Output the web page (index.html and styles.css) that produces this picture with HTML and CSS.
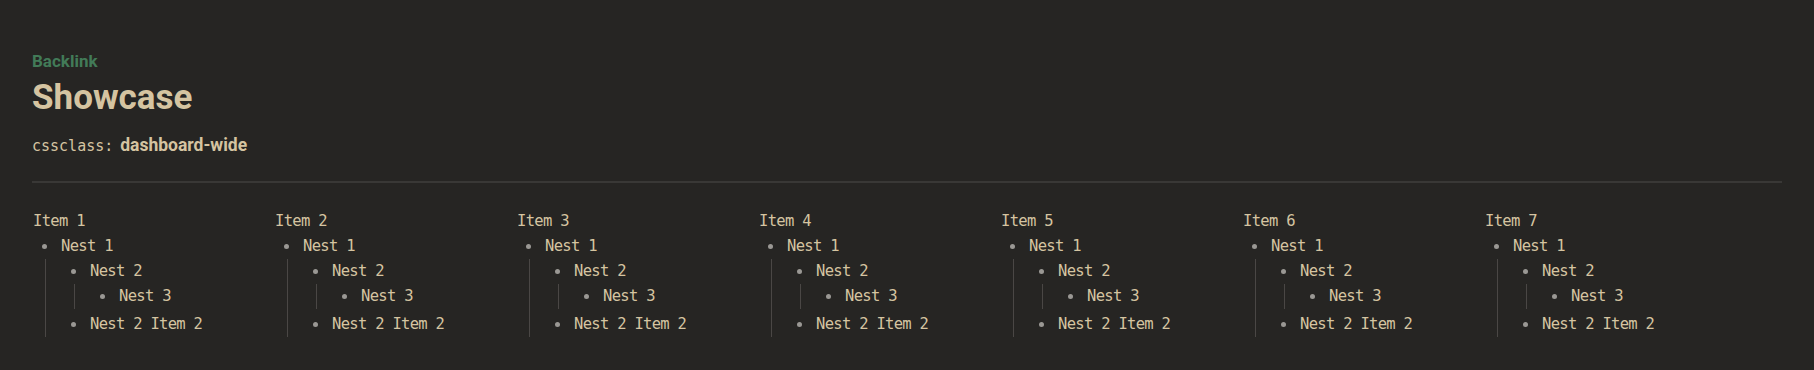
FILE: index.html
```html
<!DOCTYPE html>
<html lang="en">

<head>
  <meta charset="UTF-8">
  <meta name="viewport" content="width=device-width,initial-scale=1.0">
  <title>Showcase</title>
  <link rel="stylesheet" href="styles.css">
</head>

<body>
  <div class="page">
    <div class="backlink">Backlink</div>
    <h1 class="title">Showcase</h1>
    <div class="meta"><span class="meta-key">cssclass:</span> <span class="meta-value">dashboard-wide</span></div>
    <hr class="divider">

    <div class="columns">
      <div class="col">
        <div class="item">Item 1</div>
        <ul class="tree">
          <li>Nest 1
            <ul>
              <li>Nest 2
                <ul class="deep"><li>Nest 3</li></ul>
              </li>
              <li>Nest 2 Item 2</li>
            </ul>
          </li>
        </ul>
      </div>
      <div class="col">
        <div class="item">Item 2</div>
        <ul class="tree">
          <li>Nest 1
            <ul>
              <li>Nest 2
                <ul class="deep"><li>Nest 3</li></ul>
              </li>
              <li>Nest 2 Item 2</li>
            </ul>
          </li>
        </ul>
      </div>
      <div class="col">
        <div class="item">Item 3</div>
        <ul class="tree">
          <li>Nest 1
            <ul>
              <li>Nest 2
                <ul class="deep"><li>Nest 3</li></ul>
              </li>
              <li>Nest 2 Item 2</li>
            </ul>
          </li>
        </ul>
      </div>
      <div class="col">
        <div class="item">Item 4</div>
        <ul class="tree">
          <li>Nest 1
            <ul>
              <li>Nest 2
                <ul class="deep"><li>Nest 3</li></ul>
              </li>
              <li>Nest 2 Item 2</li>
            </ul>
          </li>
        </ul>
      </div>
      <div class="col">
        <div class="item">Item 5</div>
        <ul class="tree">
          <li>Nest 1
            <ul>
              <li>Nest 2
                <ul class="deep"><li>Nest 3</li></ul>
              </li>
              <li>Nest 2 Item 2</li>
            </ul>
          </li>
        </ul>
      </div>
      <div class="col">
        <div class="item">Item 6</div>
        <ul class="tree">
          <li>Nest 1
            <ul>
              <li>Nest 2
                <ul class="deep"><li>Nest 3</li></ul>
              </li>
              <li>Nest 2 Item 2</li>
            </ul>
          </li>
        </ul>
      </div>
      <div class="col">
        <div class="item">Item 7</div>
        <ul class="tree">
          <li>Nest 1
            <ul>
              <li>Nest 2
                <ul class="deep"><li>Nest 3</li></ul>
              </li>
              <li>Nest 2 Item 2</li>
            </ul>
          </li>
        </ul>
      </div>
    </div>
  </div>
</body>

</html>
```

FILE: styles.css
```css
html,
body {
  margin: 0;
  padding: 0;
  background: #262523;
  color: #d5c4a1;
  font-family: Roboto, "Liberation Sans", sans-serif;
}

.page {
  padding: 51px 32px 0;
}

.backlink {
  font-size: 17px;
  font-weight: bold;
  line-height: 20px;
  color: #427b58;
}

.title {
  margin: 7px 0 0;
  font-size: 35px;
  line-height: 40px;
  font-weight: bold;
}

.meta {
  margin-top: 16px;
  line-height: 22px;
}

.meta-key {
  font-family: "DejaVu Sans Mono", monospace;
  font-size: 15px;
}

.meta-value {
  margin-left: 3px;
  font-size: 17.5px;
  font-weight: bold;
}

.divider {
  margin: 24px 0 0;
  border: 0;
  border-top: 2px solid #393836;
  height: 0;
}

/* --------------------------------------------------------------
   columns of nested lists
   -------------------------------------------------------------- */
.columns {
  display: grid;
  grid-template-columns: repeat(7, 242px);
  margin-top: 26px;
  font-family: "DejaVu Sans Mono", monospace;
  font-size: 15.5px;
  letter-spacing: -0.7px;
  line-height: 25px;
}

.item {
  padding-left: 1px;
}

.tree,
.tree ul {
  list-style: none;
  margin: 0;
  padding: 0;
}

.tree li {
  position: relative;
  padding-left: 29px;
}

.tree li::before {
  content: "";
  position: absolute;
  left: 10px;
  top: 10px;
  width: 5px;
  height: 5px;
  border-radius: 50%;
  background: #9a9894;
}

.tree ul {
  margin-left: -16px;
  padding-left: 15px;
  border-left: 1px solid #4a4745;
}

.tree ul.deep {
  margin-bottom: 3px;
}
```
